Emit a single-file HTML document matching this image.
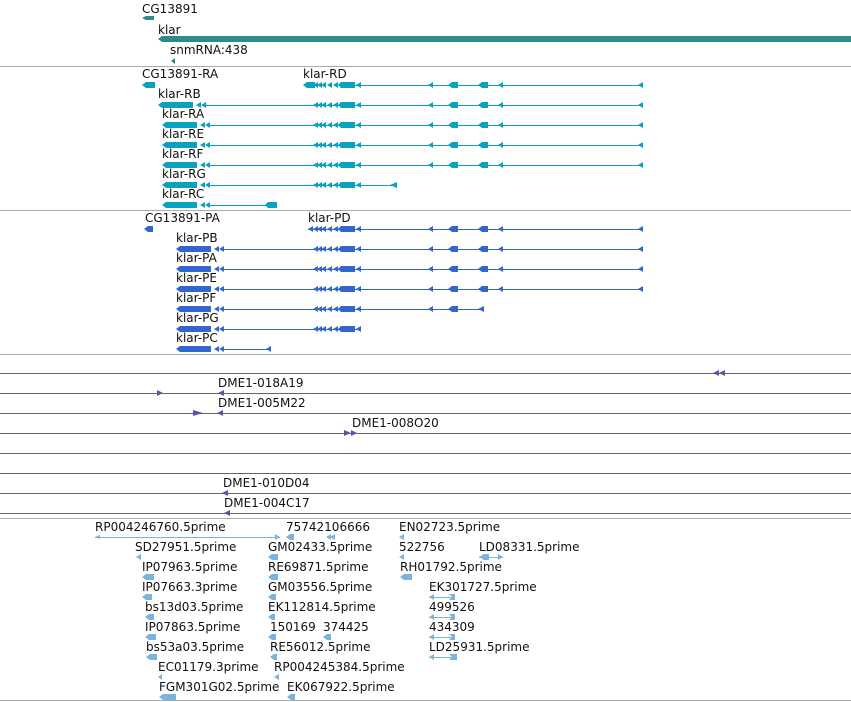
<!DOCTYPE html>
<html><head><meta charset="utf-8"><style>
html,body{margin:0;padding:0;background:#fff;width:851px;height:702px;overflow:hidden}
svg{display:block}
text{font-family:"DejaVu Sans","Liberation Sans",sans-serif;font-size:12px;fill:#111}
</style></head><body>
<svg width="851" height="702" viewBox="0 0 851 702">
<defs>
<g id="mid">
<path d="M313 0 l5 -3 v6z M317 0 l5 -3 v6z M321 0 l5 -3 v6z M327 0 l5 -3 v6z M333 0 l5 -3 v6z"/>
<path d="M338 0 l3 -3 h14 v6 h-14z"/>
<path d="M356 0 l5 -3 v6z"/>
</g>
<g id="right">
<path d="M428 0 l5 -3 v6z M638 0 l5 -3 v6z M498 0 l5 -3 v6z"/>
<path d="M448 0 l4 -3 h6 v6 h-6z M478 0 l4 -3 h6 v6 h-6z"/>
</g>
<g id="left">
<path d="M158 0 l4 -3 h31 v6 h-31z M196 0 l5 -3 v6z M201 0 l5 -3 v6z"/>
</g>
</defs>
<g fill="none" stroke="#aaa" stroke-width="1">
<path d="M0 66.5H851M0 210.5H851M0 354.5H851M0 518.5H851M0 700.5H851"/>
</g>
<!-- top -->
<text x="142" y="13">CG13891</text>
<path d="M142 18 l4 -2 h8 v4 h-8z" fill="#2a8c8c"/>
<text x="158" y="34">klar</text>
<path d="M158 39 l4 -3 h689 v6 h-689z" fill="#2a8c8c"/>
<text x="170" y="54">snmRNA:438</text>
<path d="M171 61 l4 -3 v6z" fill="#2a8c8c"/>
<!-- section 2 -->
<g fill="#0aa0c0" stroke="#0aa0c0">
<g stroke="none">
<text x="142" y="78">CG13891-RA</text><text x="303" y="78">klar-RD</text>
<text x="158" y="98">klar-RB</text><text x="162" y="118">klar-RA</text><text x="162" y="138">klar-RE</text>
<text x="162" y="158">klar-RF</text><text x="162" y="178">klar-RG</text><text x="162" y="198">klar-RC</text>
</g>
<g stroke="none">
<path d="M142 85 l4 -3 h9 v6 h-9z"/>
<path d="M303 85 l4 -3 h8 v6 h-8z"/>
<use href="#mid" y="85"/>
<use href="#right" y="85"/>
<use href="#left" y="105"/><use href="#mid" y="105"/><use href="#right" y="105"/>
<use href="#left" x="4" y="125"/><use href="#mid" y="125"/><use href="#right" y="125"/>
<use href="#left" x="4" y="145"/><use href="#mid" y="145"/><use href="#right" y="145"/>
<use href="#left" x="4" y="165"/><use href="#mid" y="165"/><use href="#right" y="165"/>
<use href="#left" x="4" y="185"/><use href="#mid" y="185"/><path d="M390 185 l7 -3 v6z"/>
<use href="#left" x="4" y="205"/><path d="M265 205 l3 -3 h9 v6 h-9z"/>
</g>
<path fill="none" stroke-width="1" d="M355 85.5H640M205 105.5H640M209 125.5H640M209 145.5H640M209 165.5H640M209 185.5H392M209 205.5H267"/>
</g>
<!-- section 3 -->
<g fill="#3366cc" stroke="#3366cc">
<g stroke="none">
<text x="145" y="222">CG13891-PA</text><text x="308" y="222">klar-PD</text>
<text x="176" y="242">klar-PB</text><text x="176" y="262">klar-PA</text><text x="176" y="282">klar-PE</text>
<text x="176" y="302">klar-PF</text><text x="176" y="322">klar-PG</text><text x="176" y="342">klar-PC</text>
<path d="M144 229 l4 -3 h5 v6 h-5z"/>
<use href="#mid" y="229"/><path d="M308 229 l5 -3 v6z"/>
<use href="#right" y="229"/>
<g transform="translate(18,249)"><use href="#left"/></g><use href="#mid" y="249"/><use href="#right" y="249"/>
<g transform="translate(18,269)"><use href="#left"/></g><use href="#mid" y="269"/><use href="#right" y="269"/>
<g transform="translate(18,289)"><use href="#left"/></g><use href="#mid" y="289"/><use href="#right" y="289"/>
<g transform="translate(18,309)"><use href="#left"/></g><use href="#mid" y="309"/><path d="M428 309 l5 -3 v6z M448 309 l4 -3 h6 v6 h-6z M478 309 l6 -3 v6z"/>
<g transform="translate(18,329)"><use href="#left"/></g><use href="#mid" y="329"/>
<g transform="translate(18,349)"><use href="#left"/></g><path d="M266 349 l5 -3 v6z"/>
</g>
<path fill="none" d="M308 229.5H640M223 249.5H640M223 269.5H640M223 289.5H640M223 309.5H483M223 329.5H358M223 349.5H270"/>
</g>
<!-- section 4 -->
<g stroke="#666" fill="none"><path d="M0 373.5H851M0 393.5H851M0 413.5H851M0 433.5H851M0 453.5H851M0 473.5H851M0 493.5H851M0 513.5H851"/></g>
<g fill="#6a4aaa">
<path d="M713 373 l6 -3 v6z M719 373 l6 -3 v6z"/>
<path d="M163 393 l-6 -3 v6z"/>
<path d="M218 393 l6 -3 v6z"/>
<path d="M203 413 l-10 -3 v6z"/>
<path d="M217 413 l6 -3 v6z"/>
<path d="M351 433 l-7 -3 v6z M357 433 l-6 -3 v6z"/>
<path d="M222 493 l6 -3 v6z"/>
<path d="M224 513 l6 -3 v6z"/>
</g>
<text x="218" y="387">DME1-018A19</text>
<text x="218" y="407">DME1-005M22</text>
<text x="352" y="427">DME1-008O20</text>
<text x="223" y="487">DME1-010D04</text>
<text x="224" y="507">DME1-004C17</text>
<!-- section 5 -->
<g>
<text x="95" y="531">RP004246760.5prime</text><text x="286" y="531">75742106666</text><text x="399" y="531">EN02723.5prime</text>
<text x="135" y="551">SD27951.5prime</text><text x="268" y="551">GM02433.5prime</text><text x="399" y="551">522756</text><text x="479" y="551">LD08331.5prime</text>
<text x="142" y="571">IP07963.5prime</text><text x="268" y="571">RE69871.5prime</text><text x="400" y="571">RH01792.5prime</text>
<text x="142" y="591">IP07663.3prime</text><text x="268" y="591">GM03556.5prime</text><text x="429" y="591">EK301727.5prime</text>
<text x="145" y="611">bs13d03.5prime</text><text x="268" y="611">EK112814.5prime</text><text x="429" y="611">499526</text>
<text x="145" y="631">IP07863.5prime</text><text x="270" y="631">150169</text><text x="323" y="631">374425</text><text x="429" y="631">434309</text>
<text x="146" y="651">bs53a03.5prime</text><text x="270" y="651">RE56012.5prime</text><text x="429" y="651">LD25931.5prime</text>
<text x="158" y="671">EC01179.3prime</text><text x="274" y="671">RP004245384.5prime</text>
<text x="159" y="691">FGM301G02.5prime</text><text x="287" y="691">EK067922.5prime</text>
</g>
<g fill="#7ab4dc" stroke="#7ab4dc">
<path fill="none" d="M95 537.5H280M479 557.5H503M429 597.5H455M429 617.5H455M429 637.5H455M429 657.5H455"/>
<g stroke="none">
<path d="M95 537 l5 -2 v4z M280 537 l-5 -3 v6z"/>
<path d="M286 537 l4 -3 h4 v6 h-4z M326 537 l5 -3 v6z M330 537 l5 -3 v6z"/>
<path d="M399 537 l5 -3 v6z"/>
<path d="M136 557 l5 -3 v6z M268 557 l4 -3 h6 v6 h-6z M399 557 l5 -3 v6z M479 557 l5 -3 h5 v6 h-5z M503 557 l-5 -3 v6z"/>
<path d="M142 577 l4 -3 h8 v6 h-8z M268 577 l4 -3 h6 v6 h-6z M400 577 l4 -3 h8 v6 h-8z"/>
<path d="M142 597 l4 -3 h6 v6 h-6z M268 597 l4 -3 h4 v6 h-4z M429 597 l5 -3 v6z M452 597 l-3 -3 h6 v6 h-6z"/>
<path d="M145 617 l4 -3 h5 v6 h-5z M268 617 l4 -3 h3 v6 h-3z M429 617 l5 -3 v6z M452 617 l-3 -3 h6 v6 h-6z"/>
<path d="M145 637 l4 -3 h7 v6 h-7z M268 637 l4 -3 h4 v6 h-4z M323 637 l4 -3 h4 v6 h-4z M429 637 l5 -3 v6z M452 637 l-3 -3 h6 v6 h-6z"/>
<path d="M146 657 l4 -3 h7 v6 h-7z M270 657 l4 -3 h3 v6 h-3z M429 657 l5 -3 v6z M452 657 l-3 -3 h8 v6 h-8z"/>
<path d="M158 677 l4 -3 v6z M274 677 l5 -3 v6z"/>
<path d="M159 697 l4 -3 h13 v6 h-13z M287 697 l4 -3 h4 v6 h-4z"/>
</g>
</g>
</svg>
</body></html>
